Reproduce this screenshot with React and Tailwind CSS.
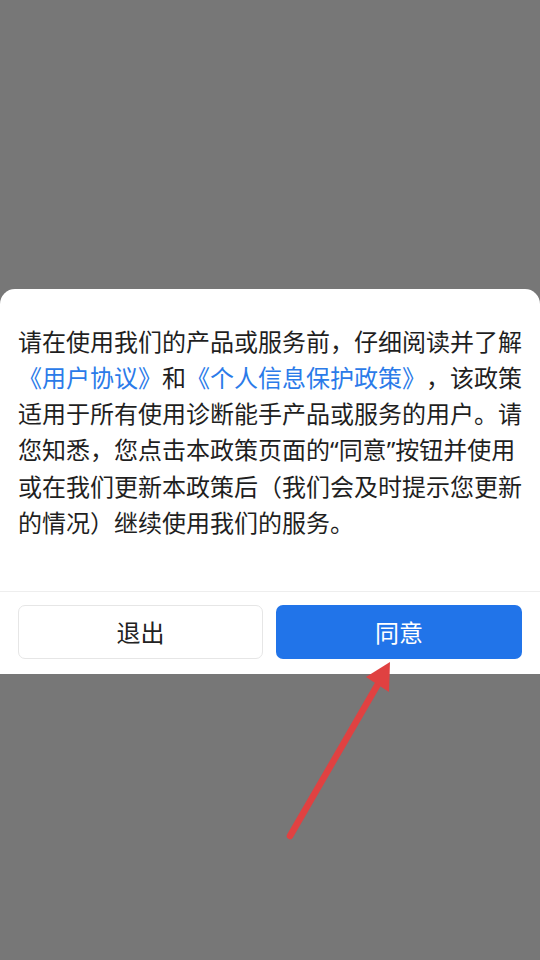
import React from "react";

const font = {
  fontFamily: '"Noto Sans CJK SC", "Noto Sans", sans-serif',
};

function Q({ children }) {
  return <span style={{ fontFamily: '"Noto Sans", sans-serif' }}>{children}</span>;
}

export default function App() {
  return (
    <div
      className="relative w-[540px] h-[960px] bg-[#777777] overflow-hidden flex flex-col"
      style={font}
    >
      <div className="mt-[289px] bg-white rounded-t-[15px] flex flex-col">
        <div className="px-[18px] pt-[34px] pb-[51px] text-[24px] leading-[36px] text-[#1f1f1f] [text-spacing-trim:space-all]">
          <div className="whitespace-nowrap">请在使用我们的产品或服务前，仔细阅读并了解</div>
          <div className="whitespace-nowrap">
            <span className="text-[#2b7be9]">《用户协议》</span>
            <span>和</span>
            <span className="text-[#2b7be9]">《个人信息保护政策》</span>
            <span>，该政策</span>
          </div>
          <div className="whitespace-nowrap">适用于所有使用诊断能手产品或服务的用户。请</div>
          <div className="whitespace-nowrap">
            您知悉，您点击本政策页面的<Q>“</Q>同意<Q>”</Q>按钮并使用
          </div>
          <div className="whitespace-nowrap">或在我们更新本政策后（我们会及时提示您更新</div>
          <div className="whitespace-nowrap">的情况）继续使用我们的服务。</div>
        </div>
        <div className="border-t border-[#eeeeee] px-[18px] pt-[13px] pb-[15px] flex gap-[13px]">
          <button className="w-[245px] h-[54px] rounded-[7px] border border-[#e6e6e6] bg-white text-[24px] text-[#222222] flex items-center justify-center">
            退出
          </button>
          <button className="w-[246px] h-[54px] rounded-[7px] bg-[#2174e9] text-[24px] text-white flex items-center justify-center">
            同意
          </button>
        </div>
      </div>
      <svg
        className="absolute left-0 top-0 pointer-events-none"
        width="540"
        height="960"
        viewBox="0 0 540 960"
      >
        <line
          x1="290"
          y1="836"
          x2="378"
          y2="684"
          stroke="#e04141"
          strokeWidth="6.5"
          strokeLinecap="round"
        />
        <polygon points="390,662 366,677 389,692" fill="#e04141" />
      </svg>
    </div>
  );
}
